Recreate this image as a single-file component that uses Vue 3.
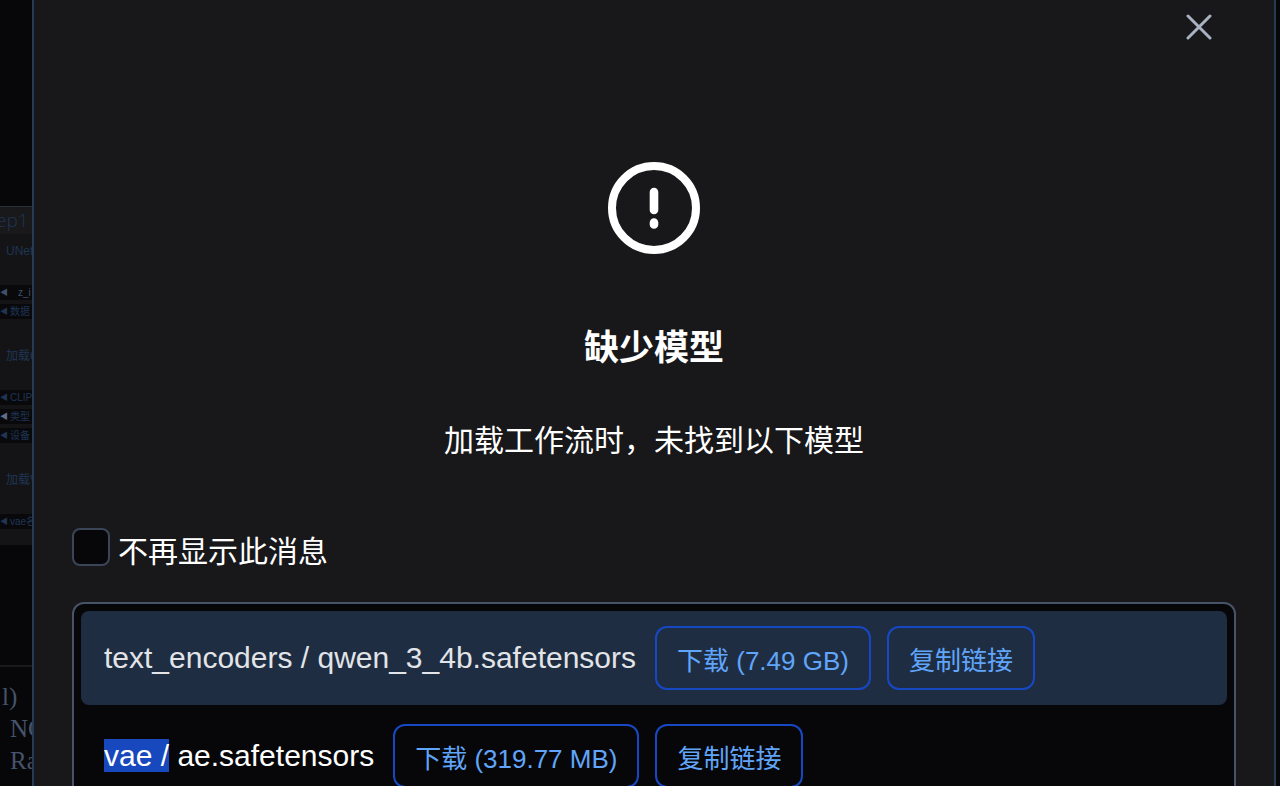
<script setup>
import { ref } from 'vue'

const hideMessage = ref(false)

const models = [
  { folder: 'text_encoders /', file: 'qwen_3_4b.safetensors', size: '7.49 GB', active: true },
  { folder: 'vae /', file: 'ae.safetensors', size: '319.77 MB', selected: true },
]

const nodeSections = [
  { title: 'UNet', params: ['z_i', '数据'] },
  { title: '加载C', params: ['CLIP', '类型', '设备'] },
  { title: '加载V', params: ['vae名'] },
]
</script>

<template>
  <div class="page">
    <aside class="canvas">
      <section class="group">
        <h2 class="group-title">ep1</h2>
        <div v-for="(s, i) in nodeSections" :key="s.title" class="node">
          <div class="node-title">{{ s.title }}</div>
          <div
            v-for="(p, j) in s.params"
            :key="p"
            class="param"
            :class="{ indented: i === 0 && j === 0, bright: p === '类型' }"
          >
            <span class="arrow">◀</span><span>{{ p }}</span>
          </div>
        </div>
      </section>
      <div class="log">
        <div class="log-line first">l)</div>
        <div class="log-line">NC</div>
        <div class="log-line">Ra</div>
      </div>
    </aside>

    <main class="dialog" role="dialog" aria-labelledby="dialog-title">
      <header class="dialog-header">
        <button class="close" type="button" aria-label="关闭">
          <svg viewBox="0 0 26 26" width="26" height="26" aria-hidden="true">
            <path d="M2 2L24 24M24 2L2 24" fill="none" stroke="currentColor" stroke-width="3" stroke-linecap="round" />
          </svg>
        </button>
      </header>

      <div class="intro">
        <svg class="alert" viewBox="0 0 92 92" aria-hidden="true">
          <circle cx="46" cy="46" r="42" fill="none" stroke="currentColor" stroke-width="8" />
          <path d="M46 30V48M46 60.5V62.5" stroke="currentColor" stroke-width="8.6" stroke-linecap="round" />
        </svg>
        <h1 id="dialog-title" class="title">缺少模型</h1>
        <p class="message">加载工作流时，未找到以下模型</p>
      </div>

      <div class="check-row">
        <input id="hide-message" v-model="hideMessage" class="check" type="checkbox" />
        <label for="hide-message">不再显示此消息</label>
      </div>

      <ul class="models">
        <li v-for="m in models" :key="m.file" class="model" :class="{ active: m.active }">
          <span class="name"><span :class="{ selected: m.selected }">{{ m.folder }}</span> {{ m.file }}</span>
          <span class="actions">
            <button class="action" type="button">下载 ({{ m.size }})</button>
            <button class="action" type="button">复制链接</button>
          </span>
        </li>
      </ul>
    </main>
  </div>
</template>

<style>
body {
  background: #070709;
}
</style>

<style scoped>
.page {
  display: flex;
  height: 100vh;
  padding-right: 4px;
  box-sizing: border-box;
  overflow: hidden;
  background: #070709;
  color: #fff;
  font-family: "Liberation Sans", "Noto Sans CJK SC", sans-serif;
}

.canvas {
  flex: 0 0 32px;
  overflow: hidden;
  padding-top: 206px;
  box-sizing: border-box;
  color: #1f3553;
  white-space: nowrap;
}

.group {
  height: 339px;
  background: #141416;
  border-top: 1px solid #29313c;
  box-sizing: border-box;
}

.group-title {
  margin: 0 0 4px -4px;
  height: 27px;
  background: #19191c;
  font-family: "Open Sans", sans-serif;
  font-size: 19px;
  font-weight: 300;
  line-height: 26px;
}

.node {
  padding-bottom: 20px;
}

.node-title {
  padding-left: 6px;
  margin-bottom: 21px;
  font-size: 12px;
  line-height: 26px;
}

.param {
  display: flex;
  gap: 3px;
  height: 15px;
  margin-bottom: 4px;
  background: #09090c;
  font-size: 10px;
  line-height: 15px;
}

.param.indented {
  gap: 11px;
  color: #40506a;
}

.param.bright .arrow {
  color: #5d6f8e;
}

.arrow {
  width: 7px;
  font-size: 8px;
}

.log {
  margin-top: 120px;
  padding-top: 14px;
  border-top: 2px solid #19191c;
  color: #46536a;
  font-family: "Liberation Serif", serif;
  font-size: 25px;
  line-height: 32px;
}

.log-line {
  padding-left: 10px;
}

.log-line.first {
  padding-left: 2px;
}

.dialog {
  flex: 1;
  min-width: 0;
  padding: 0 38px;
  background: #18181a;
  border: solid #263b58;
  border-width: 0 2px;
}

.dialog-header {
  display: flex;
  justify-content: flex-end;
  padding: 14px 24px 0 0;
}

.close {
  display: block;
  padding: 0;
  border: 0;
  background: none;
  color: #a9b2c3;
}

.close svg {
  display: block;
}

.intro {
  display: flex;
  flex-direction: column;
  align-items: center;
  padding-top: 122px;
}

.alert {
  width: 92px;
  height: 92px;
}

.title {
  margin: 69px 0 0;
  font-size: 35px;
  font-weight: 700;
  line-height: 50px;
}

.message {
  margin: 46px 0 0;
  font-size: 30px;
  line-height: 44px;
}

.check-row {
  display: flex;
  align-items: flex-start;
  gap: 8px;
  margin-top: 65px;
  font-size: 30px;
  line-height: 48px;
}

.check {
  appearance: none;
  width: 38px;
  height: 38px;
  margin: 0;
  border: 2px solid #3a4658;
  border-radius: 8px;
  background: #070709;
}

.models {
  margin: 26px 0 0;
  padding: 7px;
  border: 2px solid #475366;
  border-radius: 12px;
  background: #070709;
  list-style: none;
}

.model {
  display: flex;
  align-items: center;
  gap: 19px;
  padding: 15px 23px;
  margin-bottom: 4px;
  border-radius: 8px;
}

.model.active {
  background: #1e2d42;
  color: #e2e4e8;
}

.name {
  font-size: 30px;
  line-height: 34px;
}

.selected {
  background: #1848bd;
}

.actions {
  display: flex;
  gap: 16px;
}

.action {
  height: 64px;
  padding: 0 20px;
  border: 2px solid #1748c4;
  border-radius: 12px;
  background: none;
  color: #60a5fa;
  font: inherit;
  font-size: 26px;
}
</style>
